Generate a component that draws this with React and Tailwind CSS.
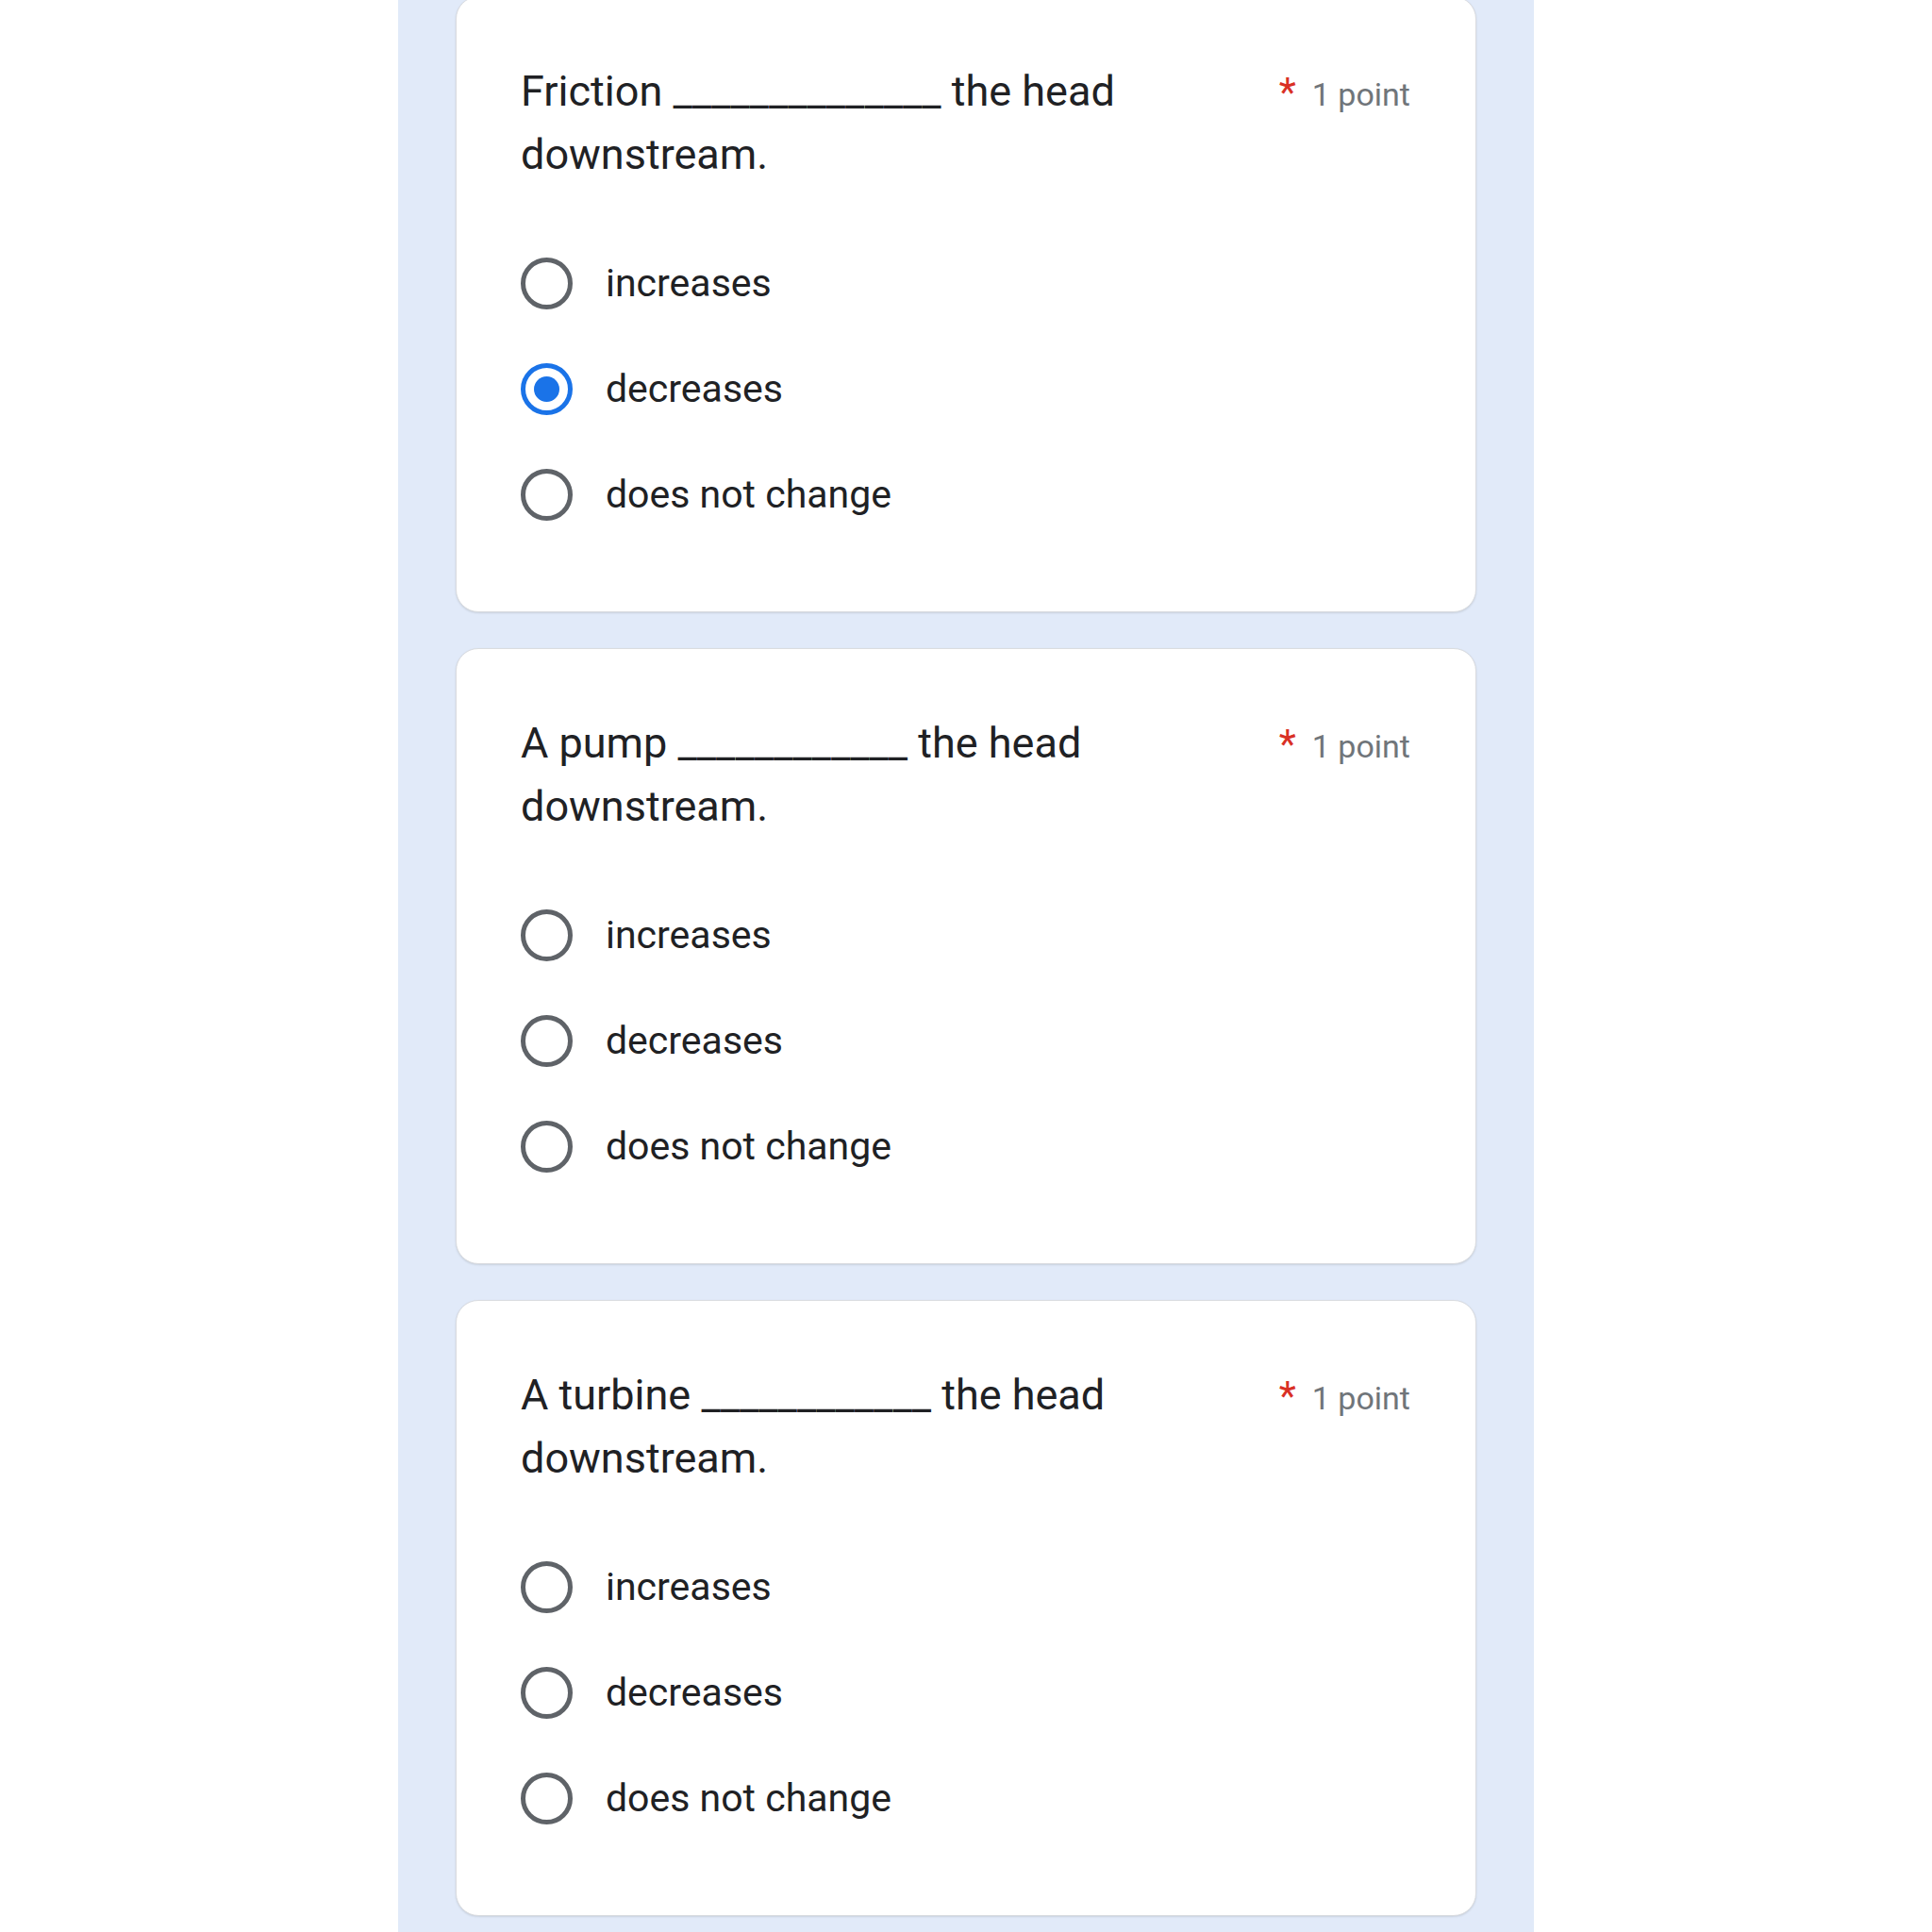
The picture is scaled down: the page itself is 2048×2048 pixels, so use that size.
import React from 'react';

const questions = [
    { prompt: 'Friction ______________ the head downstream.', selected: 1 },
    { prompt: 'A pump ____________ the head downstream.', selected: null },
    { prompt: 'A turbine ____________ the head downstream.', selected: null },
];

const choices = ['increases', 'decreases', 'does not change'];

const Radio = ({ checked }) => (
    <div
        className={
            checked
                ? 'w-[55px] h-[55px] rounded-full border-[5px] border-[#1a73e8] flex items-center justify-center shrink-0'
                : 'w-[55px] h-[55px] rounded-full border-[5px] border-[#5f6368] flex items-center justify-center shrink-0'
        }
    >
        {checked && <div className="w-[27px] h-[27px] rounded-full bg-[#1a73e8]" />}
    </div>
);

const QuestionCard = ({ prompt, selected, first }) => (
    <div
        className={
            (first ? '-mt-[4px] ' : '') +
            'bg-white border border-[#dadce0] rounded-[24px] shadow-[0_1px_2px_rgba(60,64,67,0.15)] pl-[68px] pr-[69px] pt-[66px] pb-[68px]'
        }
    >
        <div className="flex items-baseline">
            <div className="flex-1 pr-[24px] text-[45px] leading-[67px] text-[#202124]">{prompt}</div>
            <span className="text-[42px] leading-[66px] text-[#d93025]">*</span>
            <span className="ml-[17px] text-[34px] text-[#70757a]">1 point</span>
        </div>

        <div className="mt-[47px] flex flex-col">
            {choices.map((choice, i) => (
                <div key={choice} className="h-[112px] flex items-center gap-[35px]">
                    <Radio checked={selected === i} />
                    <span className="text-[41px] leading-[66px] text-[#202124]">{choice}</span>
                </div>
            ))}
        </div>
    </div>
);

export default function App() {
    return (
        <div className="w-full h-[2048px] bg-white flex justify-center overflow-hidden font-['Roboto',sans-serif]">
            <div className="w-[1204px] bg-[#e1eaf9] px-[61px] flex flex-col gap-[38px]">
                {questions.map((q, i) => (
                    <QuestionCard key={i} prompt={q.prompt} selected={q.selected} first={i === 0} />
                ))}
            </div>
        </div>
    );
}
